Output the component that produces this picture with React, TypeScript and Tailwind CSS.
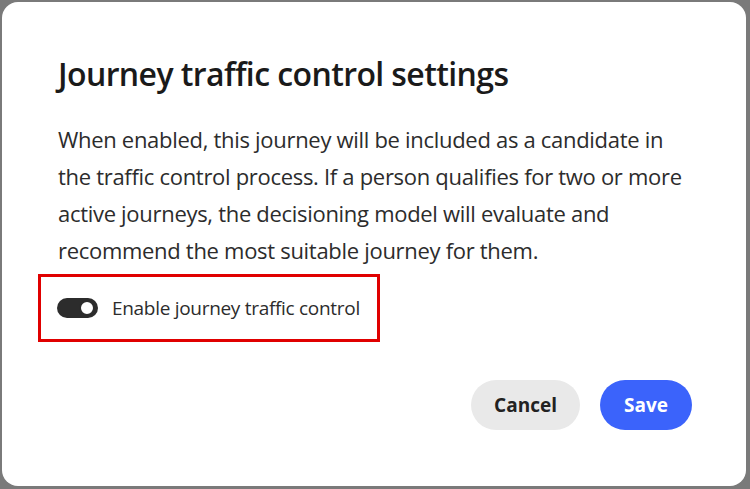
export default function App() {
  return (
    <div className="w-[750px] h-[489px] bg-[#7a7a7a] pl-[2px] pt-[2px] pr-[4px] pb-[3px]" style={{ fontFamily: "'Open Sans', 'Noto Sans', sans-serif" }}>
      <div className="w-full h-full bg-white rounded-[16px] pl-[56px] pr-[50px] pt-[52px] flex flex-col">
        <h1 className="text-[32px] leading-[40px] font-semibold tracking-[-0.6px] text-[#1a1a1a]">Journey traffic control settings</h1>
        <p className="mt-[27px] text-[22px] leading-[37px] text-[#2c2c2c] tracking-[-0.3px]">
          When enabled, this journey will be included as a candidate in the traffic control process. If a person qualifies for two or more active journeys, the decisioning model will evaluate and recommend the most suitable journey for them.
        </p>
        <div className="-ml-[20px] mt-[5px] w-[342px] h-[68px] border-[3px] border-[#e00000] flex items-center pl-[16px] gap-[14px]">
          <div className="w-[41px] h-[20px] rounded-full bg-[#2c2c2c] flex items-center justify-end pr-[3px]">
            <div className="w-[16px] h-[16px] rounded-full bg-white border-[2px] border-[#2c2c2c]"></div>
          </div>
          <span className="text-[19px] text-[#2c2c2c] tracking-[-0.3px]">Enable journey traffic control</span>
        </div>
        <div className="mt-[38px] flex justify-end gap-[20px] pr-[4px]">
          <button className="w-[109px] h-[50px] rounded-full bg-[#e9e9e9] text-[19px] font-bold text-[#222]">Cancel</button>
          <button className="w-[92px] h-[50px] rounded-full bg-[#3b63fb] text-[19px] font-bold text-white">Save</button>
        </div>
      </div>
    </div>
  );
}
